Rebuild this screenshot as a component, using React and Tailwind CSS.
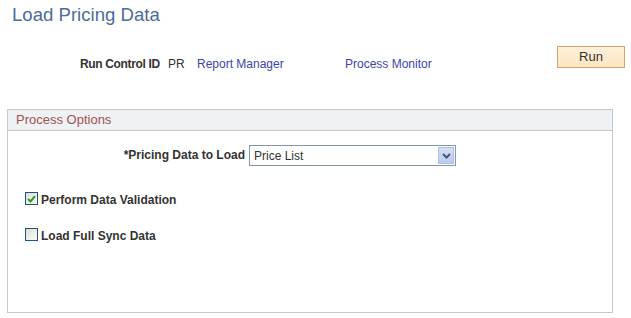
import React from 'react';

const Checkbox = ({ checked }) => (
  <span className="w-[13px] h-[13px] border border-[#1c5180] bg-gradient-to-br from-[#dcdcd7] to-[#fbfbf9] flex items-center justify-center shrink-0">
    {checked && (
      <svg width="9" height="8" viewBox="0 0 9 8">
        <path d="M1 4 L3.5 6.5 L8 1.2" fill="none" stroke="#21a121" strokeWidth="2" />
      </svg>
    )}
  </span>
);

export default function App() {
  return (
    <div className="w-[631px] h-[318px] bg-white overflow-hidden font-['Liberation_Sans',Arial,sans-serif] text-[12px] leading-[14px] text-[#333333]">
      {/* Page title */}
      <h1 className="pl-[12px] pt-[4px] text-[18.6px] leading-[21px] text-[#4b6c9c]">Load Pricing Data</h1>

      {/* Run control row */}
      <div className="flex items-start mt-[21px] pl-[80px] pr-[6px]">
        <span className="w-[88px] mt-[11px] font-bold tracking-[-0.35px]">Run Control ID</span>
        <span className="w-[29px] mt-[11px]">PR</span>
        <a className="w-[148px] mt-[11px] text-[#3d43ad]">Report Manager</a>
        <a className="mt-[11px] text-[#3d43ad]">Process Monitor</a>
        <button className="ml-auto w-[68px] h-[22px] border border-[#d3a46e] bg-gradient-to-b from-[#fdf1da] to-[#fce6c0] text-[13px] text-[#333333]">
          Run
        </button>
      </div>

      {/* Process options panel */}
      <div className="mx-[7px] mt-[38px] w-[606px] h-[204px] border border-[#c3c8ce]">
        <div className="h-[21px] pl-[8px] bg-[#eff2f4] border-b border-[#c3c8ce] text-[13px] leading-[20px] text-[#a3504d]">
          Process Options
        </div>

        <div className="flex items-start mt-[14px]">
          <span className="w-[237px] mt-[3px] text-right font-bold">*Pricing Data to Load</span>
          <div className="ml-[4px] w-[207px] h-[21px] border border-[#8496ad] flex items-center justify-between pl-[4px] pr-[1px]">
            <span className="mt-[1px]">Price List</span>
            <span className="w-[16px] h-[17px] bg-gradient-to-b from-[#d4dff7] to-[#bccbee] border border-[#aebfe6] flex items-center justify-center">
              <svg width="9" height="6" viewBox="0 0 9 6">
                <path d="M1 1 L4.5 4.5 L8 1" fill="none" stroke="#4a5672" strokeWidth="2" />
              </svg>
            </span>
          </div>
        </div>

        <div className="flex flex-col gap-[21px] mt-[26px] pl-[17px]">
          <label className="flex items-start gap-[3px]">
            <Checkbox checked />
            <span className="mt-[1px] font-bold">Perform Data Validation</span>
          </label>
          <label className="flex items-start gap-[3px]">
            <Checkbox />
            <span className="mt-[1px] font-bold">Load Full Sync Data</span>
          </label>
        </div>
      </div>
    </div>
  );
}
